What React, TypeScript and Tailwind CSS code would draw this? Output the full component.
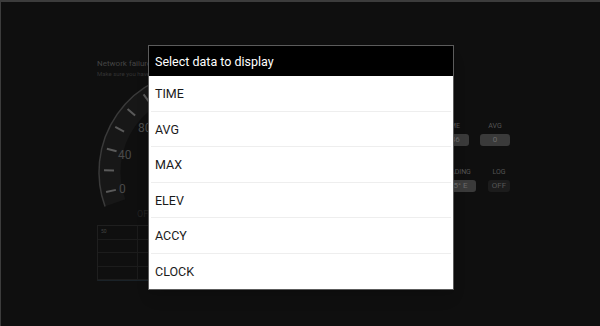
import React from 'react';

const options = ['TIME', 'AVG', 'MAX', 'ELEV', 'ACCY', 'CLOCK'];

function Gauge() {
  const cx = 110;
  const cy = 85;
  const ticks = [168, 181, 194, 208, 221, 234, 247, 260];
  const rad = (d: number) => (d * Math.PI) / 180;
  const arc = (r: number) =>
    `M ${cx - r * Math.cos(rad(20))} ${cy + r * Math.sin(rad(20))} A ${r} ${r} 0 0 1 ${cx} ${cy - r}`;
  return (
    <svg width="220" height="120" viewBox="0 0 220 120" className="block overflow-visible">
      <path d={arc(90)} fill="none" stroke="#171717" strokeWidth="21" />
      <path d={arc(101)} fill="none" stroke="#3a3a3a" strokeWidth="1.5" />
      {ticks.map((a) => (
        <line
          key={a}
          x1={cx + 86 * Math.cos(rad(a))}
          y1={cy + 86 * Math.sin(rad(a))}
          x2={cx + 96 * Math.cos(rad(a))}
          y2={cy + 96 * Math.sin(rad(a))}
          stroke="#5a5a5a"
          strokeWidth="2"
        />
      ))}
      <text x="29" y="106" fill="#4a4a4a" fontSize="12" fontFamily="Roboto, sans-serif">0</text>
      <text x="28" y="72" fill="#4a4a4a" fontSize="12" fontFamily="Roboto, sans-serif">40</text>
      <text x="48" y="45" fill="#4a4a4a" fontSize="12" fontFamily="Roboto, sans-serif">80</text>
    </svg>
  );
}

function Stat({ label, value, w, dark }: { label: string; value: string; w: string; dark?: boolean }) {
  return (
    <div className="flex flex-col items-center gap-[4px]">
      <span className="text-[7px] leading-[8px] text-[#555]">{label}</span>
      <span
        className={`${w} h-[12px] rounded-[3px] text-[8px] leading-[12px] text-center ${
          dark ? 'bg-[#1c1c1c] text-[#555]' : 'bg-[#3a3a3a] text-[#6a6a6a]'
        }`}
      >
        {value}
      </span>
    </div>
  );
}

export default function App() {
  return (
    <div
      className="relative w-[600px] h-[326px] overflow-hidden bg-[#0f0f0f] border-t-2 border-l border-[#3c3c3c]"
      style={{ fontFamily: 'Roboto, "Noto Sans", sans-serif' }}
    >
      {/* dimmed app behind the dialog */}
      <div className="flex pl-[96px] pr-[90px] pt-[57px]">
        <div className="flex flex-col w-[200px]">
          <p className="text-[8px] leading-[10px] text-[#444]">Network failure</p>
          <p className="text-[6px] leading-[9px] text-[#333]">Make sure you have a connection</p>
          <div className="mt-[9px] -ml-[7px]">
            <Gauge />
          </div>
          <p className="ml-[40px] mt-[2px] text-[9px] leading-[10px] text-[#222]">OFF</p>
          <div className="mt-[6px] w-[160px] h-[56px] border border-[#1f1f1f] border-b-[#1a2228] grid grid-cols-4 grid-rows-4">
            {Array.from({ length: 16 }).map((_, i) => (
              <div key={i} className="border-r border-b border-[#1c1c1c] relative">
                {i === 0 && <span className="absolute left-[3px] top-[2px] text-[5px] text-[#444]">50</span>}
              </div>
            ))}
          </div>
        </div>
        <div className="ml-auto mt-[63px] flex flex-col items-end gap-[22px]">
          <div className="flex gap-[11px]">
            <Stat label="TIME" value="0:46" w="w-[34px]" />
            <Stat label="AVG" value="0" w="w-[30px]" />
          </div>
          <div className="flex gap-[12px]">
            <Stat label="HEADING" value="265° E" w="w-[40px]" />
            <Stat label="LOG" value="OFF" w="w-[22px]" dark />
          </div>
        </div>
      </div>

      {/* dialog */}
      <div className="absolute left-[147px] top-[43px] w-[306px] border border-[#5c5c5c] bg-white shadow-lg">
        <div className="h-[30px] bg-black px-[6px] pt-[2px] flex items-center">
          <span className="text-[12.5px] text-white">Select data to display</span>
        </div>
        <div className="flex flex-col px-[2px]">
          {options.map((o, i) => (
            <div
              key={o}
              className={`h-[35.5px] flex items-center px-[4px] pt-[3px] text-[12.5px] text-[#1a1a1a] ${
                i < options.length - 1 ? 'border-b border-[#eeeeee]' : ''
              }`}
            >
              {o}
            </div>
          ))}
        </div>
      </div>
    </div>
  );
}
